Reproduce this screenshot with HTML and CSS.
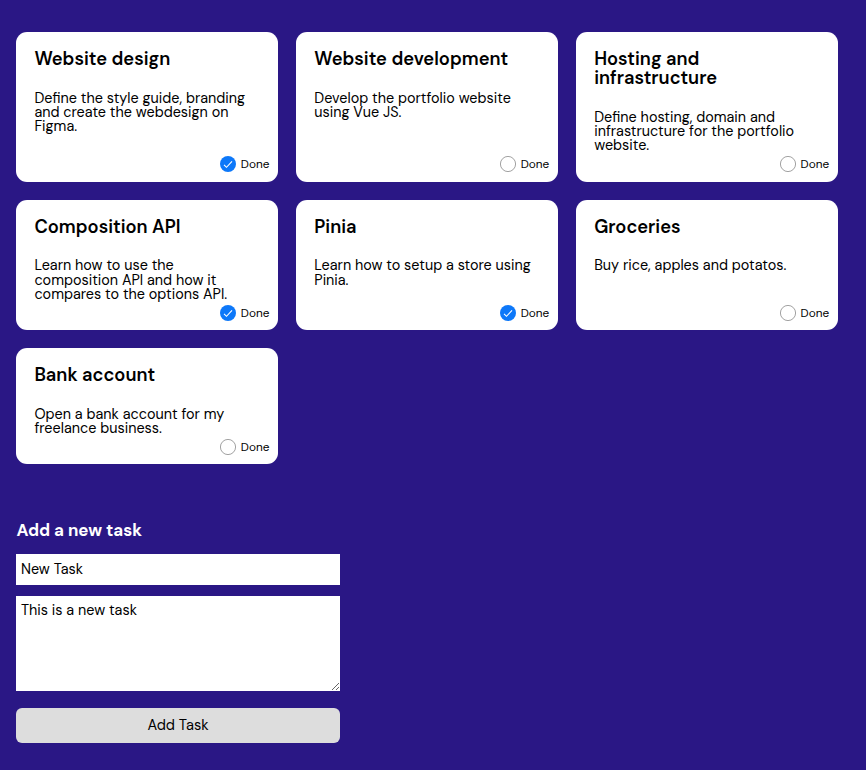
FILE: index.html
```html
<!DOCTYPE html>
<html lang="en">
<head>
<meta charset="utf-8">
<title>Tasks</title>
<link rel="stylesheet" href="styles.css">
</head>
<body>
<main>
  <section class="tasks">
    <article class="card">
      <h3>Website design</h3>
      <p>Define the style guide, branding and create the webdesign on Figma.</p>
      <label class="done"><input type="checkbox" checked><svg class="mark" viewBox="0 0 16 16"><circle cx="8" cy="8" r="8"/><path d="M4 8.8 6.5 11.3 12 5.4"/></svg><span>Done</span></label>
    </article>
    <article class="card">
      <h3>Website development</h3>
      <p>Develop the portfolio website using Vue JS.</p>
      <label class="done"><input type="checkbox"><svg class="mark empty" viewBox="0 0 16 16"><circle cx="8" cy="8" r="7.6"/></svg><span>Done</span></label>
    </article>
    <article class="card">
      <h3>Hosting and infrastructure</h3>
      <p>Define hosting, domain and infrastructure for the portfolio website.</p>
      <label class="done"><input type="checkbox"><svg class="mark empty" viewBox="0 0 16 16"><circle cx="8" cy="8" r="7.6"/></svg><span>Done</span></label>
    </article>
    <article class="card">
      <h3>Composition API</h3>
      <p>Learn how to use the composition API and how it compares to the options API.</p>
      <label class="done"><input type="checkbox" checked><svg class="mark" viewBox="0 0 16 16"><circle cx="8" cy="8" r="8"/><path d="M4 8.8 6.5 11.3 12 5.4"/></svg><span>Done</span></label>
    </article>
    <article class="card">
      <h3>Pinia</h3>
      <p>Learn how to setup a store using Pinia.</p>
      <label class="done"><input type="checkbox" checked><svg class="mark" viewBox="0 0 16 16"><circle cx="8" cy="8" r="8"/><path d="M4 8.8 6.5 11.3 12 5.4"/></svg><span>Done</span></label>
    </article>
    <article class="card">
      <h3>Groceries</h3>
      <p>Buy rice, apples and potatos.</p>
      <label class="done"><input type="checkbox"><svg class="mark empty" viewBox="0 0 16 16"><circle cx="8" cy="8" r="7.6"/></svg><span>Done</span></label>
    </article>
    <article class="card">
      <h3>Bank account</h3>
      <p>Open a bank account for my freelance business.</p>
      <label class="done"><input type="checkbox"><svg class="mark empty" viewBox="0 0 16 16"><circle cx="8" cy="8" r="7.6"/></svg><span>Done</span></label>
    </article>
  </section>
  <form class="new-task">
    <h2>Add a new task</h2>
    <input class="field" type="text" value="New Task">
    <textarea class="field">This is a new task</textarea>
    <button type="button">Add Task</button>
  </form>
</main>
</body>
</html>
```
FILE: styles.css
```css
* {
  box-sizing: border-box;
}

body {
  margin: 0;
  min-height: 770px;
  background: #2a1785;
  font-family: "DM Sans", Inter, sans-serif;
  color: #000;
}

main {
  padding: 32px 16px 0;
}

.tasks {
  display: grid;
  grid-template-columns: repeat(3, 261.9px);
  grid-template-rows: 149.8px 130.2px 116px;
  gap: 18px;
}

.card {
  display: flex;
  flex-direction: column;
  padding: 18px 18.4px 9.4px;
  border-radius: 11px;
  background: #fff;
}

h3 {
  margin: 0 0 21.6px;
  font-size: 18.3px;
  font-weight: 600;
  line-height: 19px;
}

.card p {
  margin: 0;
  font-size: 14.4px;
  line-height: 14.4px;
}

.done {
  display: flex;
  align-items: center;
  align-self: flex-end;
  gap: 4.8px;
  height: 16px;
  margin-top: auto;
  margin-right: -9.5px;
  font-size: 11.8px;
}

.done span {
  width: 28.2px;
  white-space: nowrap;
}

.done input {
  display: none;
}

.mark {
  width: 16px;
  height: 16px;
  fill: #0d78f9;
}

.mark path {
  fill: none;
  stroke: #fff;
  stroke-width: 1.1;
}

.mark.empty {
  fill: #fff;
  stroke: #8a8a8a;
  stroke-width: 0.8;
}

.new-task {
  display: flex;
  flex-direction: column;
  width: 324px;
  margin-top: 56px;
}

h2 {
  margin: 0 0 13px;
  padding-left: 0.4px;
  font-size: 16.9px;
  font-weight: 700;
  line-height: 21px;
  color: #fff;
}

.field {
  display: block;
  width: 100%;
  margin: 0;
  border: 0;
  border-radius: 0;
  padding: 5px;
  outline: 0;
  background: #fff;
  font-family: inherit;
  font-size: 14.4px;
  line-height: 18px;
  color: #000;
}

input.field {
  height: 31px;
  margin-bottom: 11px;
  padding: 6px 5px;
}

textarea.field {
  height: 95px;
  margin-bottom: 17px;
  resize: both;
}

button {
  height: 35px;
  padding: 0 6px;
  border: 0;
  border-radius: 6px;
  background: #ddd;
  font-family: inherit;
  font-size: 14.6px;
  color: #000;
}
```
